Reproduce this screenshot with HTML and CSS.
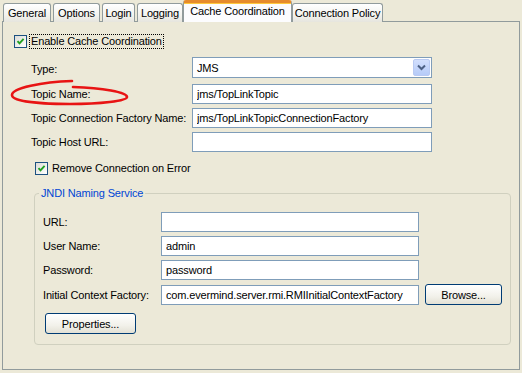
FILE: index.html
```html
<!DOCTYPE html>
<html lang="en">
<head>
  <meta charset="UTF-8" />
  <title>Cache Coordination</title>
  <link rel="stylesheet" href="styles.css">
</head>
<body>
  <div class="tabs">
    <div class="tab tab-general">General</div>
    <div class="tab tab-options">Options</div>
    <div class="tab tab-login">Login</div>
    <div class="tab tab-logging">Logging</div>
    <div class="tab tab-cache selected">Cache Coordination</div>
    <div class="tab tab-policy">Connection Policy</div>
  </div>

  <div class="panel">
    <div class="check-row top-check">
      <span class="checkbox"><svg viewBox="0 0 11 11" width="11" height="11"><path d="M2.5 5.2 L4.5 7.4 L8.6 2.8" fill="none" stroke="#21a121" stroke-width="1.9"/></svg></span>
      <span class="check-label focused">Enable Cache Coordination</span>
    </div>

    <div class="form">
      <label class="lbl">Type:</label>
      <div class="combo">
        <span class="combo-text">JMS</span>
        <span class="combo-btn"><svg viewBox="0 0 9 7" width="9" height="7"><path d="M1 1.5 L4.5 5 L8 1.5" fill="none" stroke="#4d6185" stroke-width="2"/></svg></span>
      </div>

      <label class="lbl">Topic Name:</label>
      <input class="field" type="text" value="jms/TopLinkTopic">

      <label class="lbl">Topic Connection Factory Name:</label>
      <input class="field" type="text" value="jms/TopLinkTopicConnectionFactory">

      <label class="lbl">Topic Host URL:</label>
      <input class="field" type="text" value="">
    </div>

    <div class="check-row sub-check">
      <span class="checkbox"><svg viewBox="0 0 11 11" width="11" height="11"><path d="M2.5 5.2 L4.5 7.4 L8.6 2.8" fill="none" stroke="#21a121" stroke-width="1.9"/></svg></span>
      <span class="check-label">Remove Connection on Error</span>
    </div>

    <fieldset class="group">
      <legend>JNDI Naming Service</legend>
      <div class="group-form">
        <label class="lbl">URL:</label>
        <input class="field" type="text" value="">
        <span></span>

        <label class="lbl">User Name:</label>
        <input class="field" type="text" value="admin">
        <span></span>

        <label class="lbl">Password:</label>
        <input class="field" type="text" value="password">
        <span></span>

        <label class="lbl">Initial Context Factory:</label>
        <input class="field" type="text" value="com.evermind.server.rmi.RMIInitialContextFactory">
        <button class="btn btn-browse">Browse...</button>
      </div>
      <button class="btn btn-props">Properties...</button>
    </fieldset>
  </div>

  <!-- hand drawn annotation round "Topic Name:" -->
  <svg class="marker" width="522" height="373" viewBox="0 0 522 373">
    <path d="M72 81 C42 82 12 88 12 95 C12 102 44 104 70 104 C100 104 127 101 127 97 C127 92 102 88 73 87"
          fill="none" stroke="#e81414" stroke-width="2.6" stroke-linecap="round"/>
  </svg>
</body>
</html>
```

FILE: styles.css
```css
html, body {
  margin: 0;
  padding: 0;
}

body {
  position: relative;
  width: 522px;
  height: 373px;
  overflow: hidden;
  background-color: #ece9d8;
  font-family: 'Liberation Sans', Arial, sans-serif;
  font-size: 11px;
  letter-spacing: -0.15px;
  color: #000;
}

/* === Tabs === */
.tabs {
  display: flex;
  align-items: flex-end;
  height: 22px;
  padding-left: 3px;
  position: relative;
  z-index: 2;
}

.tab {
  box-sizing: border-box;
  height: 19px;
  margin-right: 2px;
  border: 1px solid #919b9c;
  border-bottom: none;
  border-radius: 3px 3px 0 0;
  background: linear-gradient(#ffffff, #f3f3ef 60%, #e6e5de);
  text-align: center;
  line-height: 19px;
  white-space: nowrap;
}

.tab-general { width: 48px; }
.tab-options { width: 47px; }
.tab-login { width: 33px; }
.tab-logging { width: 46px; margin-right: 0; }
.tab-policy { width: 91px; }

.tab.selected {
  width: 109px;
  height: 22px;
  margin-left: 0;
  margin-right: 0;
  border-top: 3px solid #e68b2c;
  background: #fcfcfe;
  line-height: 16px;
  box-shadow: inset 0 1px 0 #ffc83c;
}

/* === Panel === */
.panel {
  box-sizing: border-box;
  width: 518px;
  height: 349px;
  margin-left: 2px;
  margin-top: -1px;
  border: 1px solid #919b9c;
  display: flex;
  flex-direction: column;
}

.check-row {
  display: flex;
  align-items: center;
  height: 13px;
}

.top-check {
  margin-top: 13px;
  padding-left: 11px;
}

.sub-check {
  margin-top: 10px;
  padding-left: 32px;
}

.checkbox {
  box-sizing: border-box;
  width: 13px;
  height: 13px;
  border: 1px solid #1c5180;
  background: linear-gradient(135deg, #dcdcd7, #ffffff);
  display: flex;
  align-items: center;
  justify-content: center;
  flex-shrink: 0;
}

.check-label {
  margin-left: 3px;
  padding: 0 1px;
  line-height: 13px;
}

.check-label.focused {
  outline: 1px dotted #000;
  outline-offset: 0;
}

/* === Forms === */
.form {
  display: grid;
  grid-template-columns: 161px 240px;
  row-gap: 4px;
  align-items: center;
  margin-top: 9px;
  padding-left: 28px;
}

.lbl {
  white-space: nowrap;
}

.field {
  box-sizing: border-box;
  height: 20px;
  width: 100%;
  margin: 0;
  padding: 0 4px;
  border: 1px solid #7f9db9;
  background: #fff;
  font-family: inherit;
  font-size: 11px;
  letter-spacing: inherit;
  color: #000;
  outline: none;
}

.combo {
  box-sizing: border-box;
  height: 21px;
  margin-bottom: 2px;
  border: 1px solid #7f9db9;
  background: #fff;
  display: flex;
  align-items: center;
  justify-content: space-between;
  padding: 0 1px 0 4px;
}

.combo-btn {
  box-sizing: border-box;
  width: 17px;
  height: 17px;
  border: 1px solid #b9caf3;
  border-radius: 2px;
  background: linear-gradient(#d2dffd, #b6cbf8);
  display: flex;
  align-items: center;
  justify-content: center;
}

/* === JNDI group === */
.group {
  box-sizing: border-box;
  width: 477px;
  height: 158px;
  margin: 12px 0 0 31px;
  padding: 13px 0 0 8px;
  border: 1px solid #d0d0bf;
  border-radius: 4px;
}

.group legend {
  color: #0046d5;
  padding: 0 2px;
  margin-left: -4px;
}

.group-form {
  display: grid;
  grid-template-columns: 118px 258px 84px;
  row-gap: 4px;
  align-items: center;
}

.btn {
  box-sizing: border-box;
  height: 21px;
  margin: 0;
  border: 1px solid #003c74;
  border-radius: 3px;
  background: linear-gradient(#ffffff, #f2f1ea 60%, #e3e1d5);
  font-family: inherit;
  font-size: 11px;
  letter-spacing: inherit;
  color: #000;
  padding: 0;
}

.btn-browse {
  width: 77px;
  margin-left: 6px;
}

.btn-props {
  display: block;
  width: 91px;
  margin: 8px 0 0 2px;
}

/* annotation layer */
.marker {
  position: absolute;
  left: 0;
  top: 0;
  pointer-events: none;
}
```
